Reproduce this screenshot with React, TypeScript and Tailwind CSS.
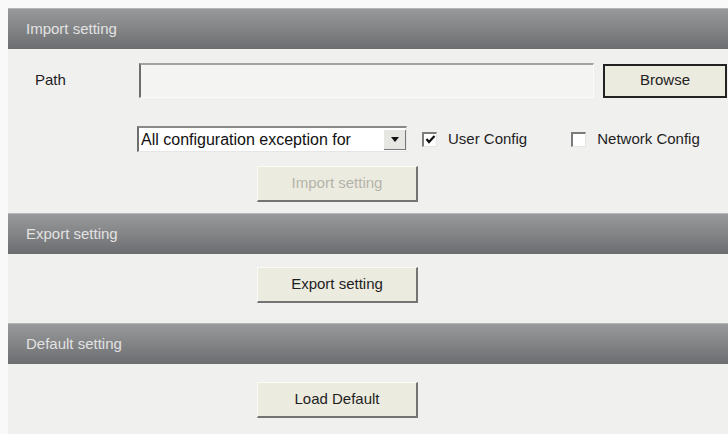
import React from "react";

const font = { fontFamily: '"Liberation Sans", Arial, sans-serif' };

function Header({ title }: { title: string }) {
  return (
    <div className="flex h-[41px] items-center border-t border-[#b4b5b7] bg-linear-to-b from-[#98999b] via-[#838486] to-[#6c6d70] pl-[18px] text-[15px] text-[#e2e2e2]">
      {title}
    </div>
  );
}

function Button({ label, disabled }: { label: string; disabled?: boolean }) {
  return (
    <button
      disabled={disabled}
      className={
        "flex h-[36px] w-[161px] items-center justify-center border-t border-l border-t-[#fbfbf6] border-l-[#fbfbf6] border-r-2 border-b-2 border-r-[#747474] border-b-[#747474] bg-[#ecebdf] text-[15px] " +
        (disabled ? "text-[#b4b3ab]" : "text-[#1e1e1e]")
      }
    >
      {label}
    </button>
  );
}

function CheckBox({ checked }: { checked?: boolean }) {
  return (
    <span className="flex h-[15px] w-[15px] items-center justify-center border-t-2 border-l-2 border-t-[#7c7c7c] border-l-[#7c7c7c] border-r border-b border-r-[#e4e4e4] border-b-[#e4e4e4] bg-white">
      {checked && (
        <svg width="11" height="11" viewBox="0 0 11 11">
          <path d="M1.5 5 L4 8 L9.5 2" stroke="#111" strokeWidth="2.2" fill="none" />
        </svg>
      )}
    </span>
  );
}

export default function App() {
  return (
    <div className="h-[434px] w-[728px] bg-[#f9f9f9] pt-2 pl-2" style={font}>
      <div className="h-full bg-[#f0f0ef]">
        <Header title="Import setting" />
        <div className="mt-[14px] flex items-center">
          <span className="w-[131px] pl-[27px] text-[15px] text-[#1e1e1e]">Path</span>
          <div className="h-[35px] w-[455px] border-t-2 border-l-2 border-t-[#a3a3a3] border-l-[#6e6e6e] border-r border-b border-r-[#fafafa] border-b-[#fafafa] bg-[#f4f4f3]" />
          <button className="ml-[9px] h-[34px] w-[124px] border-2 border-[#222] bg-[#ecebdf] text-[15px] text-[#222]">
            Browse
          </button>
        </div>
        <div className="mt-[28px] flex items-center">
          <div className="ml-[129px] flex h-[26px] w-[270px] items-center border-t-2 border-l-2 border-t-[#8a8a8a] border-l-[#6e6e6e] border-r border-b border-r-[#e6e6e6] border-b-[#e6e6e6] bg-white">
            <span className="flex-1 overflow-hidden pl-[2px] whitespace-nowrap text-[16px] text-[#111]">
              All configuration exception for
            </span>
            <span className="flex h-[20px] w-[22px] items-center justify-center border-r border-b border-r-[#777] border-b-[#777] bg-[#e6e6e2]">
              <svg width="8" height="5" viewBox="0 0 8 5">
                <path d="M0 0 H8 L4 5 Z" fill="#111" />
              </svg>
            </span>
          </div>
          <div className="ml-[15px] flex items-center">
            <CheckBox checked />
            <span className="ml-[11px] text-[15px] text-[#1e1e1e]">User Config</span>
          </div>
          <div className="ml-[44px] flex items-center">
            <CheckBox />
            <span className="ml-[11px] text-[15px] text-[#1e1e1e]">Network Config</span>
          </div>
        </div>
        <div className="mt-[14px] ml-[249px]">
          <Button label="Import setting" disabled />
        </div>
        <div className="mt-[11px]">
          <Header title="Export setting" />
        </div>
        <div className="mt-[13px] ml-[249px]">
          <Button label="Export setting" />
        </div>
        <div className="mt-[20px]">
          <Header title="Default setting" />
        </div>
        <div className="mt-[18px] ml-[249px]">
          <Button label="Load Default" />
        </div>
      </div>
    </div>
  );
}
